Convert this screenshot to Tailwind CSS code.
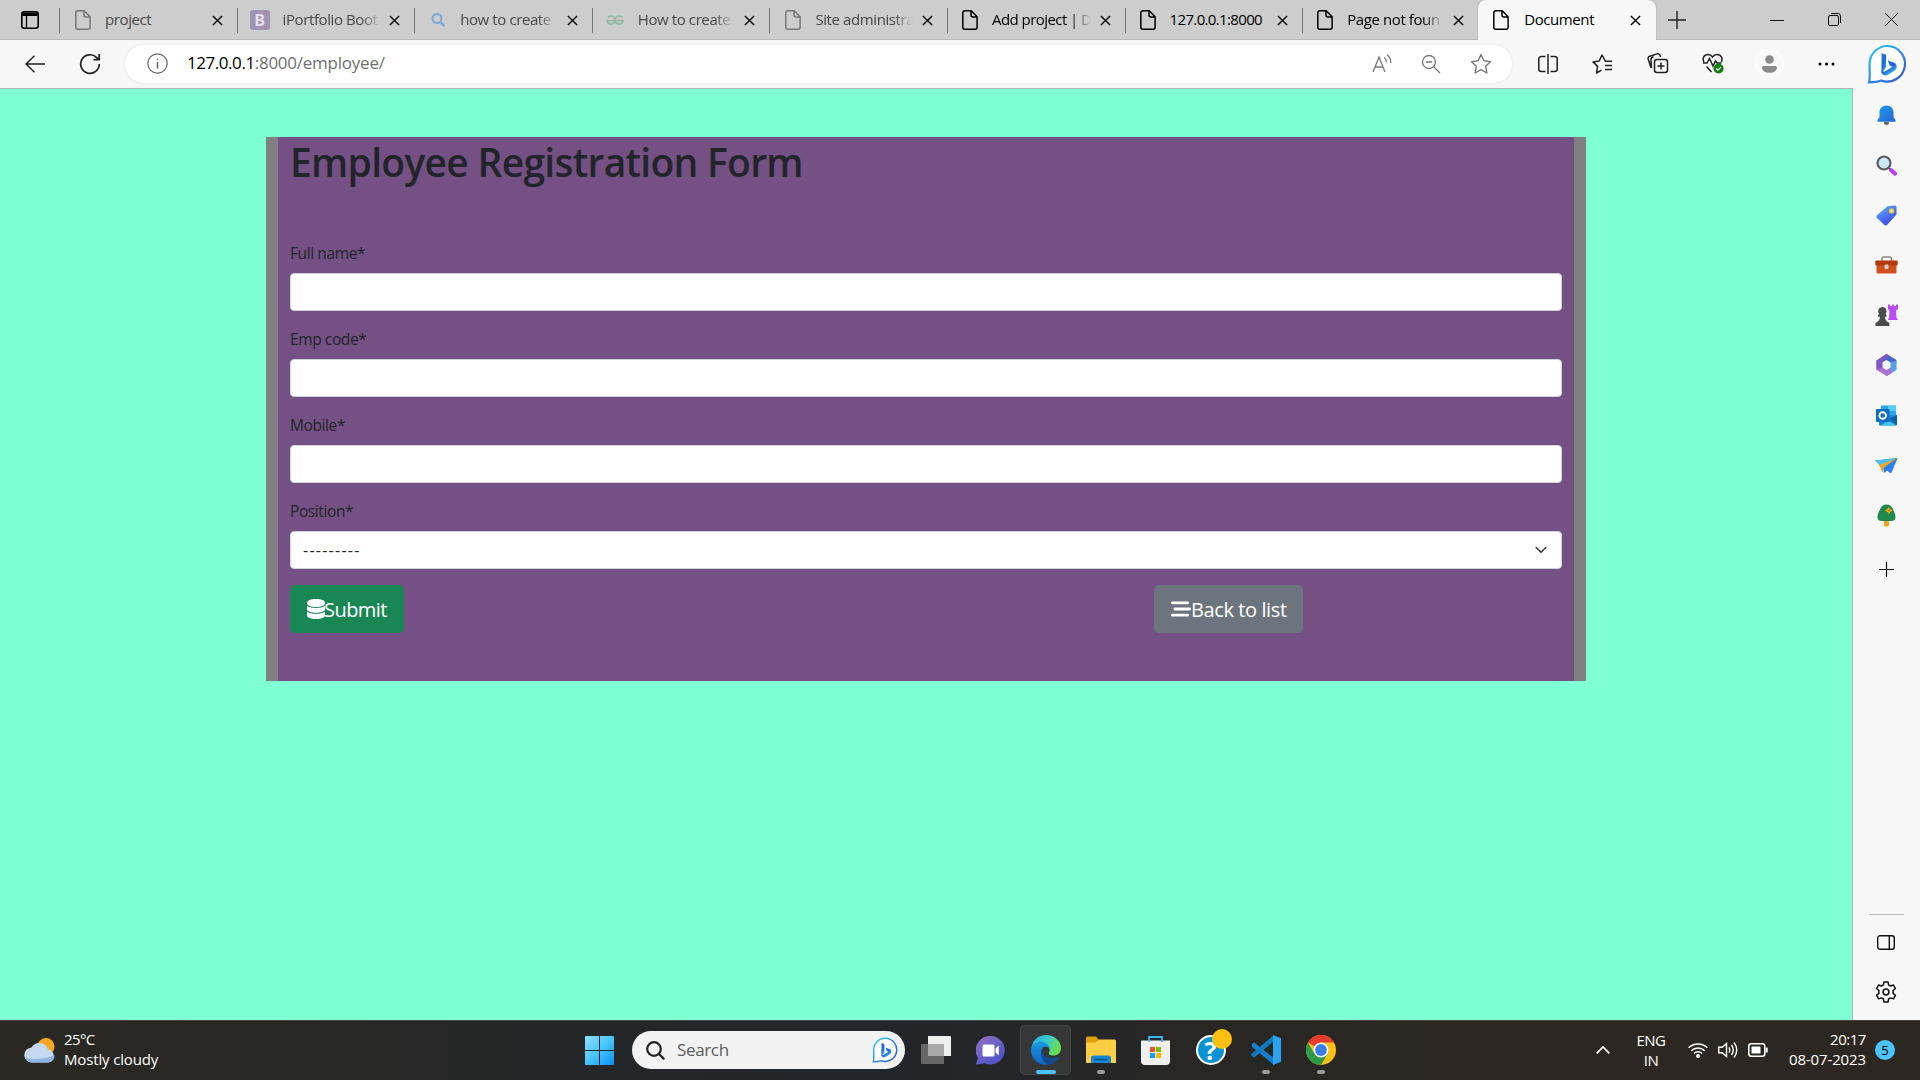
<!DOCTYPE html>
<html lang="en">
<head>
<meta charset="utf-8">
<title>Document</title>
<script src="https://cdn.jsdelivr.net/npm/@tailwindcss/browser@4"></script>
</head>
<body class="w-[1920px] h-[1080px] overflow-hidden flex flex-col bg-[#f7f7f7] font-['Open_Sans','Noto_Sans',sans-serif] text-black">

<!-- shared symbols -->
<svg class="absolute size-0">
  <defs>
  <linearGradient id="bl" x1="0" y1="0" x2="1" y2="1"><stop offset="0" stop-color="#2bd0f5"/><stop offset=".5" stop-color="#2a8cf0"/><stop offset="1" stop-color="#2a4fd0"/></linearGradient>
  <linearGradient id="bb" x1="0" y1="0" x2="0.7" y2="1"><stop offset="0" stop-color="#2a8af0"/><stop offset=".55" stop-color="#2060dc"/><stop offset="1" stop-color="#36c6ee"/></linearGradient>
  </defs>
  <symbol id="file" viewBox="0 0 16 20"><path d="M2.8.8h6.4l5.9 5.9v10.5a2 2 0 0 1-2 2H2.8a2 2 0 0 1-2-2V2.8a2 2 0 0 1 2-2zM9 .8V5a2 2 0 0 0 2 2h4" fill="none" stroke="currentColor" stroke-width="1.5" stroke-linejoin="round"/></symbol>
  <symbol id="x" viewBox="0 0 12 12"><path d="M1 1l10 10M11 1L1 11" fill="none" stroke="currentColor" stroke-width="1.5"/></symbol>
  <symbol id="bing" viewBox="0 0 40 40"><path d="M20.500 2a17.800 17.800 0 1 1-6.500 34.500C11 38 6 38.300 2 38.300 3.300 35 2.500 26 2.600 20A17.800 17.800 0 0 1 20.500 2z" fill="#fff" stroke="url(#bl)" stroke-width="2.200"/><path d="M14.500 9l4.600 1.800v12.700l-4.600 5.700z" fill="url(#bb)"/><path d="M14.500 25.500v2.200c0 3.600 3.800 4.600 6.400 3l6.200-3.800c1.800-1.100 2.900-3 2.500-5.200-.3-1.700-1.400-2.700-2.900-3.300l-6-2.200 2 5.300 2.800 1.300-6.800 4.200c-2 1.300-4.200.2-4.200-1.500z" fill="url(#bb)"/></symbol>
</svg>

<!-- tab strip -->
<header class="h-10 shrink-0 flex items-stretch bg-[#cdcdcd] shadow-[inset_0_-1px_0_#bababa] text-[15px] leading-[38px] tracking-[-0.4px]">
  <div class="w-[59px] flex items-center pl-[21px]">
    <svg class="size-[18px]" viewBox="0 0 18 18"><rect x=".8" y=".8" width="16.400" height="16.400" rx="2.500" fill="none" stroke="#000" stroke-width="1.600"/><path d="M1 1.500h16V5H1z"/><path d="M5.500 5v12" stroke="#000" stroke-width="1.300"/></svg>
  </div>
  <div class="w-[177.600px] flex items-center pr-[14px]"><i class="w-px h-[25px] bg-[#757575]"></i><svg class="w-4 h-5 ml-[15px] text-[#777]"><use href="#file"/></svg><span class="pb-0.5 ml-[14px] w-[99px] overflow-hidden whitespace-nowrap text-[#484848]">project</span><svg class="size-[11px] ml-auto"><use href="#x"/></svg></div>
  <div class="w-[177.600px] flex items-center pr-[14px]"><i class="w-px h-[25px] bg-[#757575]"></i><b class="size-5 ml-[12px] rounded-[3px] bg-[#a094b2] text-[16px] text-[#e4e0e8] leading-5 text-center tracking-normal">B</b><span class="pb-0.5 ml-[13px] w-[98px] overflow-hidden whitespace-nowrap text-[#484848] mask-r-from-80%">iPortfolio Boot</span><svg class="size-[11px] ml-auto"><use href="#x"/></svg></div>
  <div class="w-[177.600px] flex items-center pr-[14px]"><i class="w-px h-[25px] bg-[#757575]"></i><svg class="w-4 h-5 ml-[15px]" viewBox="0 0 16 20" fill="none" stroke="#78a9d8" stroke-width="2"><circle cx="7" cy="8.500" r="4.500"/><path d="M10.300 12l4 4.200" stroke-width="2.400"/></svg><span class="pb-0.5 ml-[14px] w-[98px] overflow-hidden whitespace-nowrap text-[#484848] mask-r-from-80%">how to create</span><svg class="size-[11px] ml-auto"><use href="#x"/></svg></div>
  <div class="w-[177.600px] flex items-center pr-[14px]"><i class="w-px h-[25px] bg-[#757575]"></i><svg class="w-[18px] h-5 ml-[13px]" viewBox="0 0 18 20" fill="none" stroke="#8fb79c" stroke-width="1.600"><path d="M1.800 7.600A4 4 0 1 1 1 10.500H17A4 4 0 1 1 16.200 7.600"/></svg><span class="pb-0.5 ml-[14px] w-[96px] overflow-hidden whitespace-nowrap text-[#484848] mask-r-from-80%">How to create</span><svg class="size-[11px] ml-auto"><use href="#x"/></svg></div>
  <div class="w-[177.600px] flex items-center pr-[14px]"><i class="w-px h-[25px] bg-[#757575]"></i><svg class="w-4 h-5 ml-[15px] text-[#777]"><use href="#file"/></svg><span class="pb-0.5 ml-[14px] w-[98px] overflow-hidden whitespace-nowrap text-[#484848] mask-r-from-80%">Site administra</span><svg class="size-[11px] ml-auto"><use href="#x"/></svg></div>
  <div class="w-[177.600px] flex items-center pr-[14px]"><i class="w-px h-[25px] bg-[#757575]"></i><svg class="w-4 h-5 ml-[14px]"><use href="#file"/></svg><span class="pb-0.5 ml-[14px] w-[99px] overflow-hidden whitespace-nowrap tracking-[-0.550px] mask-r-from-80%">Add project | D</span><svg class="size-[11px] ml-auto"><use href="#x"/></svg></div>
  <div class="w-[177.600px] flex items-center pr-[14px]"><i class="w-px h-[25px] bg-[#757575]"></i><svg class="w-4 h-5 ml-[14px]"><use href="#file"/></svg><span class="pb-0.5 ml-[14px] w-[99px] overflow-hidden whitespace-nowrap tracking-[-0.650px]">127.0.0.1:8000</span><svg class="size-[11px] ml-auto"><use href="#x"/></svg></div>
  <div class="w-[176px] flex items-center pr-[14px]"><i class="w-px h-[25px] bg-[#757575]"></i><svg class="w-4 h-5 ml-[14px]"><use href="#file"/></svg><span class="pb-0.5 ml-[14px] w-[96px] overflow-hidden whitespace-nowrap mask-r-from-80%">Page not foun</span><svg class="size-[11px] ml-auto"><use href="#x"/></svg></div>
  <div class="w-[177.500px] flex items-center pr-[15px] rounded-t-[8px] bg-[#f7f7f7] shadow-[0_0_2px_#999] [clip-path:inset(-2px_-2px_0_-2px)]"><svg class="w-4 h-5 ml-[15px]"><use href="#file"/></svg><span class="pb-0.5 ml-[15px]">Document</span><svg class="size-[11px] ml-auto"><use href="#x"/></svg></div>
  <svg class="size-[18px] self-center ml-[12px] mb-px" viewBox="0 0 18 18" stroke="#222" stroke-width="1.400"><path d="M9 0v18M0 9h18"/></svg>
  <div class="ml-auto flex items-center gap-[44px] pr-[22px] pb-px">
    <svg class="w-[14px] h-3" viewBox="0 0 14 12" stroke="#111"><path d="M0 6.500h14"/></svg>
    <svg class="size-[13px]" viewBox="0 0 13 13" fill="none" stroke="#111"><rect x=".5" y="2.500" width="10" height="10" rx="1.500"/><path d="M3 .5h7a2.500 2.500 0 0 1 2.500 2.500v7"/></svg>
    <svg class="size-[13px]" viewBox="0 0 13 13" stroke="#111"><path d="M0 0l13 13M13 0L0 13"/></svg>
  </div>
</header>

<!-- address bar -->
<div class="h-12 shrink-0 flex items-center pl-[25px] pr-[13px] pb-px text-[#222]">
  <svg class="w-5 h-[18px]" viewBox="0 0 20 18" fill="none" stroke="#222" stroke-width="1.400"><path d="M20 9H1M9.500.7L1 9l8.500 8.300"/></svg>
  <svg class="size-[22px] ml-[34px]" viewBox="0 0 22 22" fill="none" stroke="#222" stroke-width="1.700"><path d="M20.300 11A9.300 9.300 0 1 1 17.500 4.400L20 6.500M20.200 1v5.700h-5.700"/></svg>
  <div class="ml-[24px] w-[1387px] h-[38px] rounded-full bg-white shadow-[0_0_3px_#ddd] flex items-center pl-[22px] pr-[20px]">
    <svg class="size-[21px]" viewBox="0 0 21 21" fill="none" stroke="#666" stroke-width="1.200"><circle cx="10.500" cy="10.500" r="9.700"/><path d="M10.500 9v6.500" stroke-width="1.500"/><circle cx="10.500" cy="6.200" r=".5" stroke-width="1"/></svg>
    <span class="ml-[19px] pb-px text-[17px] leading-[36px] tracking-[-0.450px] text-black">127.0.0.1<span class="text-[#707070] tracking-[-0.240px]">:8000/employee/</span></span>
    <div class="ml-auto flex items-center text-[#777]">
      <svg class="w-[20px] h-5" viewBox="0 0 20 20" fill="none" stroke="currentColor" stroke-width="1.300"><path d="M1 18L7 3l6 15M3 13h8M12.500 3.500q2 2 2 5M15 .8q4 3.200 3.800 8.200"/></svg>
      <svg class="size-5 ml-[29px]" viewBox="0 0 20 20" fill="none" stroke="currentColor" stroke-width="1.300"><circle cx="8" cy="8" r="6.500"/><path d="M12.700 12.700L19 19M5 8h6"/></svg>
      <svg class="size-[22px] ml-[29px]" viewBox="0 0 22 22" fill="none" stroke="currentColor" stroke-width="1.400" stroke-linejoin="round"><path d="M11 1.500l2.900 6.200 6.700.9-4.900 4.700 1.200 6.700-5.900-3.300-5.900 3.300 1.200-6.700L1.400 8.600l6.700-.9z"/></svg>
    </div>
  </div>
  <div class="ml-auto flex items-center text-[#222]">
    <svg class="w-5 h-[20px]" viewBox="0 0 20 20" fill="none" stroke="currentColor" stroke-width="1.500"><path d="M7.500 2.500H3.300a2.500 2.500 0 0 0-2.500 2.500v10a2.500 2.500 0 0 0 2.500 2.500H7.500M12.500 2.500h4.200a2.500 2.500 0 0 1 2.500 2.500v10a2.500 2.500 0 0 1-2.500 2.500H12.500M10 0v20"/></svg>
    <svg class="w-[22px] h-5 ml-[34px]" viewBox="0 0 22 20" fill="none" stroke="currentColor" stroke-width="1.500" stroke-linejoin="round"><path d="M20 7.300h-6.500L10 1 7.200 7 1 7.900l4.600 4.500L4.500 19l5-2.800M13 11.500h7M13 15.500h7"/></svg>
    <svg class="w-[22px] h-[21px] ml-[33px]" viewBox="0 0 22 21" fill="none" stroke="currentColor" stroke-width="1.500"><rect x="7.500" y="6.500" width="13" height="13" rx="2.500"/><path d="M14 9.500v7M10.500 13h7M4 14.500L1.200 6.200a2.300 2.300 0 0 1 1.500-2.900l7.500-2.400a2.300 2.300 0 0 1 2.900 1.500L13.500 4M4.500 15l-.6-8a3 3 0 0 1 2.700-3"/></svg>
    <svg class="w-[23px] h-[21px] ml-[33px]" viewBox="0 0 23 21" fill="none" stroke="currentColor" stroke-width="1.500"><path d="M2 9C0 5.500 2 1.500 6 1.500c2.200 0 3.500 1 4.500 2.500 1-1.500 2.300-2.500 4.500-2.500 4.500 0 6 4.500 4.300 7.500M1 10h4l2.500-4.500 3.500 7.500L13.500 8l1.500 2h4.500M4.500 13.500l5 5.500"/><circle cx="16.500" cy="15.500" r="5" fill="#107c10" stroke="none"/><path d="M14.200 15.500l1.700 1.700 3-3" stroke="#fff" stroke-width="1.200"/></svg>
    <div class="size-[29px] ml-[30px] rounded-full bg-[#f9f9f9] border border-white flex justify-center items-center"><svg class="w-[15px] h-[18px]" viewBox="0 0 15 18" fill="#8a8a8a"><circle cx="7.500" cy="4.500" r="4.300"/><path d="M1.500 11h12a1.500 1.500 0 0 1 1.500 1.500c0 3-3 5.300-7.500 5.300S0 15.500 0 12.500A1.500 1.500 0 0 1 1.500 11z"/></svg></div>
    <svg class="w-[17px] h-1 ml-[34px]" viewBox="0 0 17 4"><circle cx="2" cy="2" r="1.500"/><circle cx="8.500" cy="2" r="1.500"/><circle cx="15" cy="2" r="1.500"/></svg>
    <svg class="size-[40px] ml-[32px]"><use href="#bing"/></svg>
  </div>
</div>

<div class="flex-1 min-h-0 flex">
  <!-- page -->
  <main class="w-[1853px] border-t border-r border-[#b5b5b5] bg-[#7fffd4] flex justify-center items-start pt-12 text-[#212529]">
    <form class="w-[1320px] h-[544px] bg-[#745085] border-x-12 border-[#808080] px-3">
      <h1 class="h-12 text-[39px] leading-[49px] font-semibold tracking-[-0.710px] whitespace-nowrap">Employee Registration Form</h1>
      <div class="mt-14 flex flex-col gap-4 text-[15.500px] leading-6 tracking-[-0.400px]">
        <label class="block">Full name*<input type="text" class="block mt-2 w-full h-[38px] rounded-[4px] border border-[#ced4da] bg-white"></label>
        <label class="block">Emp code*<input type="text" class="block mt-2 w-full h-[38px] rounded-[4px] border border-[#ced4da] bg-white"></label>
        <label class="block">Mobile*<input type="text" class="block mt-2 w-full h-[38px] rounded-[4px] border border-[#ced4da] bg-white"></label>
        <div>Position*
          <div class="mt-2 w-full h-[38px] rounded-[4px] border border-[#ced4da] bg-white flex items-center justify-between pl-3 pr-[14px]"><span class="text-[16px] leading-9 tracking-[1.250px]">---------</span>
            <svg class="w-3 h-[8px]" viewBox="0 0 12 8" fill="none" stroke="#343a40" stroke-width="1.600" stroke-linecap="round" stroke-linejoin="round"><path d="M1.200 1.500L6 6.300l4.800-4.800"/></svg></div>
        </div>
      </div>
      <div class="mt-4 grid grid-cols-3 gap-x-0 text-[20px] leading-[30px] text-white">
        <button type="button" class="col-span-2 justify-self-start w-[114px] h-12 rounded-[5px] bg-[#198754] flex items-center pl-[17px] tracking-[-0.550px] whitespace-nowrap"><svg class="w-[18px] h-5" viewBox="0 0 18 20" fill="#fff"><path d="M9 0c5 0 9 1.600 9 3.500v1C18 6.400 14 8 9 8S0 6.400 0 4.500v-1C0 1.600 4 0 9 0z"/><path d="M0 6.800C1.800 8.300 5.200 9 9 9s7.200-.7 9-2.200v3.400c0 2-4 3.600-9 3.600s-9-1.600-9-3.600z"/><path d="M0 12.500c1.800 1.500 5.200 2.300 9 2.300s7.200-.8 9-2.300v4c0 2-4 3.500-9 3.500s-9-1.500-9-3.500z"/></svg><span class="pt-0.5 -ml-px">Submit</span></button>
        <button type="button" class="ml-[16px] w-[149px] h-12 rounded-[5px] bg-[#6c757d] flex items-center pl-[17px] tracking-[-0.400px] whitespace-nowrap"><svg class="w-5 h-4" viewBox="0 0 20 16" stroke="#fff" stroke-width="2.800" stroke-linecap="round"><path d="M1.400 1.800h15.200M3.800 8h14.800M1.400 14.200h15.200"/></svg><span class="pt-0.5">Back to list</span></button>
      </div>
    </form>
  </main>

  <!-- browser sidebar -->
  <aside class="w-[67px] pt-[2px] pr-px flex flex-col items-center">
    <div class="h-[50px] flex items-center"><svg class="w-[19px] h-[21px]" viewBox="0 0 19 21"><defs><linearGradient id="s1" x2="1" y2="1"><stop stop-color="#1fa0e8"/><stop offset="1" stop-color="#2a5fd8"/></linearGradient></defs><path d="M7 17h5v1a2.500 2 0 0 1-5 0z" fill="#666"/><path d="M9.500.5C5 .5 2.500 3.500 2.500 7.500V12L.5 15v1.700h18V15l-2-3V7.500c0-4-2.500-7-7-7z" fill="url(#s1)"/></svg></div>
    <div class="h-[50px] flex items-center"><svg class="size-[21px]" viewBox="0 0 21 21"><path d="M12.500 12.500l2 2" stroke="#555" stroke-width="2"/><path d="M15 15l4 3.700" stroke="#b83cf0" stroke-width="4" stroke-linecap="round"/><circle cx="8" cy="8" r="6.500" fill="#cbe9fa" stroke="#5c5c5c" stroke-width="2.200"/></svg></div>
    <div class="h-[50px] flex items-center"><svg class="size-[21px]" viewBox="0 0 21 21"><defs><linearGradient id="s3" x2=".6" y2="1"><stop stop-color="#64b8fa"/><stop offset="1" stop-color="#3b46ea"/></linearGradient></defs><path d="M11.500 1.200L19 .5a1.500 1.500 0 0 1 1.500 1.500v7.500l-9.300 10.300a2 2 0 0 1-2.800.1L1 13a2 2 0 0 1 0-2.800z" fill="url(#s3)"/><circle cx="15.500" cy="6" r="2" fill="#e8e8ff" stroke="#ecc12c" stroke-width="1.500"/></svg></div>
    <div class="h-[50px] flex items-center"><svg class="w-[23px] h-[18px]" viewBox="0 0 23 18"><path d="M7 5V3a2 2 0 0 1 2-2h5.500a2 2 0 0 1 2 2v2" fill="none" stroke="#8b8b8b" stroke-width="1.600"/><path d="M1.500 8h20v8a1.500 1.500 0 0 1-1.500 1.500H3A1.500 1.500 0 0 1 1.500 16z" fill="#d4501e"/><rect x=".3" y="4.500" width="22.400" height="5" rx="1" fill="#b53a0d"/><rect x="9.500" y="8.500" width="4" height="4.500" rx="1" fill="#d0d0d0"/></svg></div>
    <div class="h-[50px] flex items-center"><svg class="size-[23px]" viewBox="0 0 23 23"><path d="M13 .5h2V2h2V.5h2V2h2V.5h2V5l-2 2 .5 6.500L23 16H13l1-2.500.5-6.500L13 5z" fill="#b94df2"/><path d="M7.300 3a4.200 4.200 0 0 1 3.200 7l1 1v1.700H10c0 3 1.300 4.600 4.300 6.300V22H.5v-3C3.500 17.300 5 15.700 5 12.700H3V11l1.200-1A4.200 4.200 0 0 1 7.300 3z" fill="#4b4b4b"/></svg></div>
    <div class="h-[50px] flex items-center"><svg class="w-[21px] h-[22px]" viewBox="0 0 21 22"><path d="M10.500 0l9 5.200a2 2 0 0 1 1 1.800L20 11l-5.500-2.500L10.500 6 6 8.500v6.200L.5 15.500V6.500z" fill="#4466c8"/><path d="M.5 6.500L10.500 0 13 1.500 6.500 8v6l-2.500 3.500L.5 15.500z" fill="#8158c4"/><path d="M20.500 7v9L11 22l-3-4 6.500-4.500V8z" fill="#58a0e8"/><path d="M.5 15.500L6.500 13.500l4 2.500 4-2 1.500 5L10.500 22z" fill="#ad6fd0"/><path d="M10.500 7L14 9v4l-3.500 2.300L7 13V9z" fill="#f7f7f7"/></svg></div>
    <div class="h-[50px] flex items-center"><svg class="w-[21px] h-[21px]" viewBox="0 0 21 21"><path d="M5 .5h14a1 1 0 0 1 1 1V12H5z" fill="#2ba5e8"/><path d="M12 .5h8V6h-8z" fill="#55cdf8"/><path d="M3 11l18-1v9.500a1 1 0 0 1-1 1H4a1 1 0 0 1-1-1z" fill="#1b87d6"/><path d="M21 10v10L13 14z" fill="#0e5ea8"/><path d="M5 20.500h15l-8-5z" fill="#3fc0f5"/><rect x="0" y="4" width="13.500" height="13" rx="1" fill="#0f6cc4"/><circle cx="6.700" cy="10.500" r="3.300" fill="none" stroke="#fff" stroke-width="1.900"/></svg></div>
    <div class="h-[50px] flex items-center"><svg class="w-[23px] h-[17px]" viewBox="0 0 23 17"><path d="M0 3.500L22.500 1 16 16l-4-2.500L9.500 16 8 11z" fill="#2f86ea"/><path d="M0 3.500L22.500 1 6 8.500z" fill="#4cbff5"/><path d="M22.500 1L4 8l3.500 7.500L9 10.500z" fill="#f2a81e"/><path d="M22.500 1L9 10.500l-.5 5L12 13.500l4 3z" fill="#2f80ee"/></svg></div>
    <div class="h-[50px] flex items-center"><svg class="w-[19px] h-[23px]" viewBox="0 0 19 23"><path d="M7 15h5v6a1.500 1.500 0 0 1-1.500 1.500h-2A1.500 1.500 0 0 1 7 21z" fill="#f2a31c"/><path d="M9.500.5c3.500 0 5.500 2 6.500 5 1.500 2.500 2.500 5 2.500 7.500 0 3-2 4-4 4h-10c-2.500 0-4-1.500-4-4 0-2.500 1-5 2.500-7.500C4 2.500 6 .5 9.500.5z" fill="#1f8a4c"/><path d="M11.500 3l1.500 2 2.500 1.500-2.300 1.200-1.200 2.300-1.500-2L8 6.500l2.300-1.200z" fill="#ffb900"/><circle cx="11.800" cy="6.500" r="1" fill="#d05010"/></svg></div>
    <div class="h-[58px] flex items-center"><svg class="size-[15px]" viewBox="0 0 15 15" stroke="#111" stroke-width="1.200"><path d="M7.500 0v15M0 7.500h15"/></svg></div>
    <i class="mt-auto w-[35px] h-px bg-[#b8b8b8]"></i>
    <svg class="w-[18px] h-[15px] mt-[20px]" viewBox="0 0 18 15" fill="none" stroke="#111" stroke-width="1.400"><rect x=".7" y=".7" width="16.600" height="13.600" rx="2.300"/><path d="M12.300 1v13"/></svg>
    <svg class="size-[22px] mt-[31px] mb-[17px]" viewBox="0 0 22 22" fill="none" stroke="#111" stroke-width="1.500" stroke-linejoin="round"><path d="M9 1h4l.6 2.900 1.900 1.100 2.900-1 2 3.500-2.300 2v2.900l2.300 2-2 3.500-2.900-1-1.900 1.100L13 21H9l-.6-3-1.900-1.100-2.900 1-2-3.500 2.300-2V9.500l-2.300-2L3.600 4l2.900 1 1.900-1.100z"/><circle cx="11" cy="11" r="2.900"/></svg>
  </aside>
</div>

<!-- taskbar -->
<footer class="h-[60px] shrink-0 flex items-center shadow-[inset_0_1px_0_#454543] bg-linear-to-r from-[#2a2822] via-[#22252a] via-45% to-[#2c2821] to-75% text-[15px] leading-5 text-white">
  <div class="w-[585px] flex items-center pl-[24px]">
    <svg class="w-[32px] h-[26px]" viewBox="0 0 32 26"><circle cx="22" cy="9.500" r="8.500" fill="#f5a623"/><path d="M8 25.500a7.500 7.500 0 0 1-.5-15A9 9 0 0 1 24 12.500a6.600 6.600 0 0 1 .5 13z" fill="#c4d8f2"/><path d="M8 25.500A7.500 7.500 0 0 1 1 20c5 3 20 3 29.500-2a6.500 6.500 0 0 1-6 7.500z" fill="#8fb4e6"/></svg>
    <div class="ml-2 pb-[3px] tracking-[-0.150px]"><div class="tracking-[-0.600px]">25°C</div><div>Mostly cloudy</div></div>
  </div>
  <svg class="size-[29px]" viewBox="0 0 29 29"><defs><linearGradient id="w" x2="1" y2="1"><stop stop-color="#8fe0ff"/><stop offset=".5" stop-color="#48c4fb"/><stop offset="1" stop-color="#0b90f5"/></linearGradient></defs><path d="M1 0h13v14H0V1a1 1 0 0 1 1-1zM15 0h13a1 1 0 0 1 1 1v13H15zM0 15h14v14H1a1 1 0 0 1-1-1zM15 15h14v13a1 1 0 0 1-1 1H15z" fill="url(#w)"/></svg>
  <div class="ml-[18px] w-[273px] h-[38px] rounded-full bg-[#f2f2f2] flex items-center pl-[14px] pr-[7px] text-[17px] text-[#5c5c5c] tracking-[-0.350px]">
    <svg class="size-[19px]" viewBox="0 0 19 19" fill="none" stroke="#222" stroke-width="2.200" stroke-linecap="round"><circle cx="8" cy="8" r="6.800"/><path d="M13 13l4.600 4.600"/></svg>
    <span class="ml-[12px]">Search</span>
    <svg class="size-[26px] ml-auto"><use href="#bing"/></svg>
  </div>
  <div class="ml-[3px] flex items-center">
    <div class="w-[55px] flex justify-center"><svg class="w-[30px] h-7" viewBox="0 0 30 28"><path d="M7 0h22a1 1 0 0 1 1 1v19H7z" fill="#eee"/><path d="M1 8h21a1 1 0 0 1 1 1v19H1a1 1 0 0 1-1-1V9a1 1 0 0 1 1-1z" fill="#666"/><path d="M7 8h15a1 1 0 0 1 1 1v11H7z" fill="#a8a8a8"/></svg></div>
    <div class="w-[55px] flex justify-center"><svg class="size-[29px]" viewBox="0 0 29 29"><defs><linearGradient id="ch" x2=".8" y2="1"><stop stop-color="#a070b8"/><stop offset=".5" stop-color="#6a62c8"/><stop offset="1" stop-color="#4c50c4"/></linearGradient></defs><path d="M14.500 0a14.300 14.300 0 1 1-6 27.300L1 28.500c-.8 0-1-.5-.8-1.200L2 22A14.300 14.300 0 0 1 14.500 0z" fill="url(#ch)"/><rect x="6.500" y="8.500" width="12" height="12" rx="1.500" fill="#fff"/><path d="M19.500 12.500l3.300-3v10l-3.300-3z" fill="#fff"/></svg></div>
    <div class="relative w-[51px] mx-[2px] h-[50px] rounded-[5px] bg-white/8 border border-white/8 flex justify-center items-center"><svg class="size-[30px]" viewBox="0 0 30 30"><defs><linearGradient id="e1" x1="0" x2="1" y2=".4"><stop stop-color="#2ea5e4"/><stop offset=".5" stop-color="#34c8d4"/><stop offset="1" stop-color="#6ade52"/></linearGradient><linearGradient id="e2" x2="0" y2="1"><stop stop-color="#1a9bdf"/><stop offset="1" stop-color="#0c63c0"/></linearGradient></defs><path d="M.5 13C1.500 5 7.500 0 15 0c8.500 0 15 6 15 13 0 5-3.500 7.500-7.500 7.500-3.500 0-5.500-1.200-4.500-3 2-3-.5-7-5-7C7 10.500 2 13 .5 13z" fill="url(#e1)"/><path d="M0 14.500C1 8.500 6 6.500 10 6.500c5 0 9 4 9 8-1-3-5-4-7-2-3 3-2.500 10.500 4.500 14.500 1 .7 0 2.800-1.500 3C6 30 0 23 0 14.500z" fill="url(#e2)"/><path d="M12 12.500c-4 4.500-1 15.500 5.500 17.300 4-.3 8-3 10.500-7 .5-1-.3-1.300-1-1-7 3-14.500.5-15.500-5-.2-1.500.1-3 .5-4.300z" fill="#124a8c"/></svg><i class="absolute bottom-0 left-[15px] w-5 h-1 rounded-full bg-[#4cc2ff]"></i></div>
    <div class="relative w-[55px] h-[50px] flex justify-center items-center"><svg class="w-[30px] h-7" viewBox="0 0 30 28"><path d="M0 2a1.500 1.500 0 0 1 1.500-1.500H10L13 4v8H0z" fill="#e0a008"/><path d="M0 6.500h9.500L13 3.500h15.500A1.500 1.500 0 0 1 30 5v22H0z" fill="#fdce45"/><path d="M5 27V22a2.500 2.500 0 0 1 2.500-2.500h15A2.500 2.500 0 0 1 25 22v5z" fill="#1686d0"/><path d="M8.500 23.500h13" stroke="#0b4f8c" stroke-width="1.500"/></svg><i class="absolute bottom-px w-2 h-1 rounded-full bg-[#9c9b99]"></i></div>
    <div class="w-[55px] flex justify-center"><svg class="size-[29px]" viewBox="0 0 29 29"><path d="M0 4.500h29V25a4 4 0 0 1-4 4H4a4 4 0 0 1-4-4z" fill="#efefef"/><path d="M8 6V1h13v5" fill="none" stroke="#38b6f0" stroke-width="1.800"/><path d="M9 11h5v5H9z" fill="#f25022"/><path d="M15 11h5v5h-5z" fill="#7fba00"/><path d="M9 17h5v5H9z" fill="#00a4ef"/><path d="M15 17h5v5h-5z" fill="#ffb900"/></svg></div>
    <div class="relative w-[55px] flex justify-center"><b class="size-[30px] rounded-full border-2 border-white bg-[#0a93d4] text-[25px] leading-[26px] text-center">?</b><i class="absolute -top-[6px] left-[29px] size-5 rounded-full bg-[#fdc010]"></i></div>
    <div class="relative w-[55px] h-[50px] flex justify-center items-center"><svg class="size-[30px]" viewBox="0 0 30 30"><path d="M1 9l2-1.700 20 16V30L1 12z" fill="#1480cc"/><path d="M1 21l2 1.700L23 6V0L.8 18.500a1.700 1.700 0 0 0 .2 2.500z" fill="#1278c2"/><path d="M22 0l8 3.300v23.400L22 30z" fill="#2ba2ef"/></svg><i class="absolute bottom-px w-2 h-1 rounded-full bg-[#9c9b99]"></i></div>
    <div class="relative w-[55px] h-[50px] flex justify-center items-center"><svg class="size-[30px]" viewBox="0 0 30 30"><circle cx="15" cy="15" r="15" fill="#fbc116"/><path d="M15 15L2 7.500A15 15 0 0 1 28 7.500H15z" fill="#e33b2e"/><path d="M2 7.500A15 15 0 0 0 15 30l6.500-11.300L15 15 8.500 18.800z" fill="#2c9a48"/><circle cx="15" cy="15" r="7.500" fill="#fff"/><circle cx="15" cy="15" r="5.900" fill="#3b7de8"/></svg><i class="absolute bottom-px w-2 h-1 rounded-full bg-[#9c9b99]"></i></div>
  </div>
  <div class="ml-auto flex items-center pr-[25px]">
    <svg class="w-[14px] h-2" viewBox="0 0 14 8" fill="none" stroke="#fff" stroke-width="1.700"><path d="M.7 7.300L7 1l6.300 6.300"/></svg>
    <div class="ml-[26px] w-[30px] pb-px text-center tracking-[-0.500px]">ENG<br>IN</div>
    <svg class="w-5 h-4 ml-[22px]" viewBox="0 0 20 16" fill="none" stroke="#fff" stroke-width="1.500"><path d="M.6 5.800a13.300 13.300 0 0 1 18.800 0M3.300 8.700a9.500 9.500 0 0 1 13.400 0M6 11.500a5.600 5.600 0 0 1 8 0"/><circle cx="10" cy="14" r="1.200" fill="#fff"/></svg>
    <svg class="w-5 h-[18px] ml-[10px]" viewBox="0 0 20 18" fill="none" stroke="#fff" stroke-width="1.400"><path d="M.7 6.300h3.500L8.500 2.500v13L4.200 11.700H.7zM11 6.300q1.500 2.700 0 5.400M13.500 4q3.500 5 0 10M16 1.500q5.500 7.500 0 15"/></svg>
    <svg class="w-5 h-[14px] ml-[10px]" viewBox="0 0 20 14" fill="none" stroke="#fff" stroke-width="1.500"><rect x=".8" y=".8" width="16" height="12.400" rx="2.500"/><rect x="3.500" y="3.500" width="9" height="7" rx=".5" fill="#fff" stroke="none"/><path d="M18.700 4.500v5" stroke-width="2"/></svg>
    <div class="w-[98px] pb-[3px] text-right"><div class="tracking-[-0.450px]">20:17</div><div class="tracking-[-0.120px]">08-07-2023</div></div>
    <b class="ml-[9px] size-5 rounded-full bg-[#4cc2ff] text-[13px] leading-5 font-normal text-black text-center">5</b>
  </div>
</footer>
</body>
</html>
